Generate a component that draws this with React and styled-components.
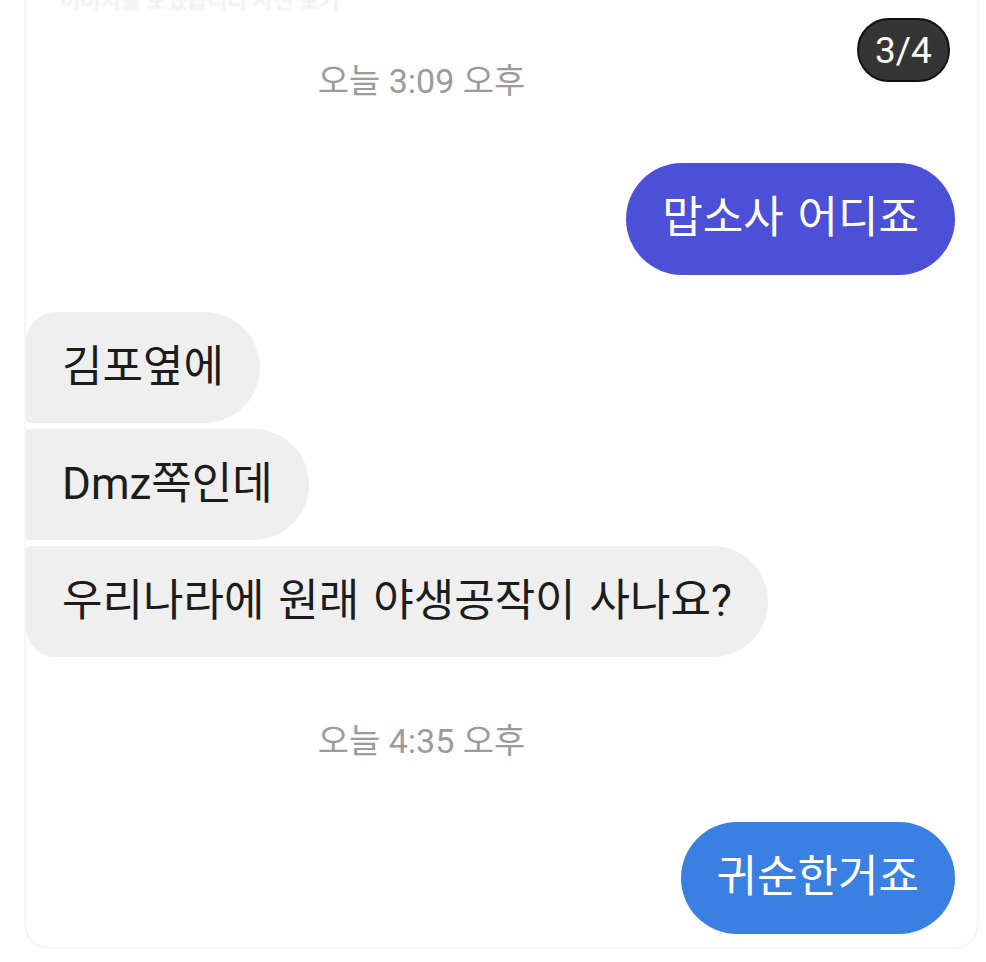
import React from "react";
import styled, { createGlobalStyle } from "styled-components";

const Global = createGlobalStyle`
  html, body { margin: 0; padding: 0; background: #ffffff; }
  body { font-family: Roboto, "Noto Sans CJK KR", "Noto Sans", sans-serif; overflow: hidden; }
`;

const Page = styled.div`
  width: 986px;
  height: 962px;
  overflow: hidden;
  position: relative;
`;

const Card = styled.div`
  margin: -40px 9px 0 26px;
  padding: 40px 0 13px 0;
  border-radius: 22px;
  box-shadow: 0 0 0 1.5px #f4f4f4;
  display: flex;
  flex-direction: column;
`;

const Preview = styled.div`
  height: 12px;
  overflow: hidden;
  padding-left: 34px;
  display: flex;
  flex-direction: column;
  justify-content: flex-end;
`;

const PreviewLine = styled.div`
  font-size: 22px;
  line-height: 22px;
  color: #e8e8e8;
  white-space: nowrap;
  filter: blur(0.8px);
`;

const Stamp = styled.div`
  font-size: 34px;
  line-height: 40px;
  color: #9b9b9b;
  text-align: center;
  padding-right: 160px;
  margin-top: ${(p) => p.$top}px;
`;

const Row = styled.div`
  display: flex;
  justify-content: ${(p) => (p.$out ? "flex-end" : "flex-start")};
  padding-right: ${(p) => (p.$out ? "22px" : "0")};
  margin-top: ${(p) => p.$top}px;
`;

const Group = styled.div`
  display: flex;
  flex-direction: column;
  align-items: flex-start;
  gap: 6px;
  margin-top: ${(p) => p.$top}px;
`;

const Bubble = styled.div`
  font-size: 44px;
  line-height: 53px;
  word-spacing: 3px;
  padding: 29px 36px 30px;
  border-radius: 56px;
  white-space: nowrap;
  color: ${(p) => (p.$bg ? "#ffffff" : "#1c1c1c")};
  background: ${(p) => p.$bg || "#efefef"};
`;

const InBubble = styled(Bubble)`
  padding: 29px 36px 29px;
  border-radius: ${(p) =>
    p.$pos === "first"
      ? "30px 56px 56px 4px"
      : p.$pos === "last"
      ? "4px 56px 56px 30px"
      : "4px 56px 56px 4px"};
`;

const Badge = styled.div`
  position: absolute;
  top: 18px;
  left: 857px;
  width: 89px;
  height: 60px;
  border-radius: 32px;
  background: #353535;
  border: 2px solid #111111;
  color: #ffffff;
  font-family: Roboto, "Noto Sans", sans-serif;
  font-size: 37px;
  display: flex;
  align-items: center;
  justify-content: center;
`;

export default function App() {
  return (
    <Page>
      <Global />
      <Card>
        <Preview>
          <PreviewLine>이미지를 보냈습니다 사진 보기</PreviewLine>
        </Preview>
        <Stamp $top={49}>오늘 3:09 오후</Stamp>
        <Row $out $top={62}>
          <Bubble $bg="#4b50d6">맙소사 어디죠</Bubble>
        </Row>
        <Group $top={37}>
          <InBubble $pos="first">김포옆에</InBubble>
          <InBubble $pos="mid">Dmz쪽인데</InBubble>
          <InBubble $pos="last">우리나라에 원래 야생공작이 사나요?</InBubble>
        </Group>
        <Stamp $top={64}>오늘 4:35 오후</Stamp>
        <Row $out $top={61}>
          <Bubble $bg="#3a80e2">귀순한거죠</Bubble>
        </Row>
      </Card>
      <Badge>3/4</Badge>
    </Page>
  );
}
